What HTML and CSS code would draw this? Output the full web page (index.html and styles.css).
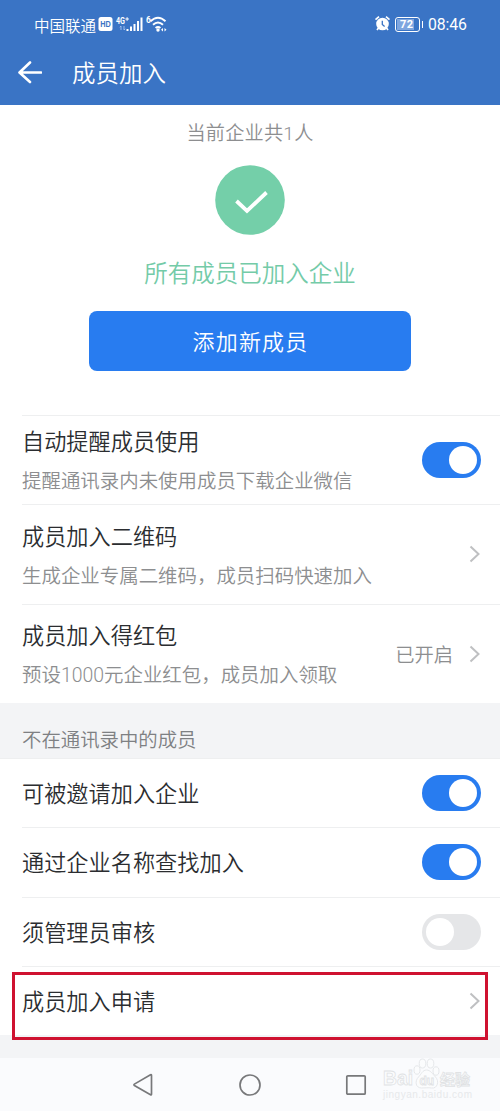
FILE: index.html
```html
<!DOCTYPE html>
<html lang="zh-CN">
<head>
<meta charset="utf-8">
<title>成员加入</title>
<link rel="stylesheet" href="styles.css">
</head>
<body>
<div class="screen">
  <header class="header">
    <div class="status">
      <span class="carrier">中国联通</span>
      <svg class="signals" width="72" height="20" viewBox="0 0 72 20">
        <rect x="1.500" y="3" width="14" height="14" rx="2.500" fill="#fff"/>
        <text class="hd" x="3.200" y="13.200" textLength="10.600" lengthAdjust="spacingAndGlyphs">HD</text>
        <text class="tiny" x="19" y="9.500" textLength="9" lengthAdjust="spacingAndGlyphs">4G</text>
        <path d="M28.300 5h3.600M30.100 3.200v3.600" stroke="#fff" stroke-width="1"/>
        <path d="M24 12v4M22.800 13.200L24 12M27 12v4l1.200-1.200" stroke="#a9c5ef" stroke-width=".9" fill="none"/>
        <path d="M30.500 17v-2M34 17v-4.500M37.500 17v-7M41 17v-10M44.500 17V3.500" stroke="#fff" stroke-width="2"/>
        <text class="tiny" x="49" y="9">6</text>
        <g fill="none" stroke="#fff" stroke-width="1.900"><path d="M53.500 7.200q7.500-7 15 0M56 10.800q5-4.600 10 0M58.600 14q2.400-2.200 4.800 0"/></g>
        <circle cx="61" cy="16" r="1.700" fill="#fff"/>
        <path d="M64 15.800l2-1.800v3.600zM69.500 15.800l-2-1.800v3.600z" fill="#fff"/>
      </svg>
      <span class="grow"></span>
      <svg class="alarm" width="17" height="17" viewBox="0 0 17 17">
        <circle cx="8.500" cy="9" r="6.300" fill="#fff"/>
        <path d="M1.500 4.600L5 1.600M15.500 4.600L12 1.600M4.500 13l-1.500 2M12.500 13l1.500 2" stroke="#fff" stroke-width="1.700"/>
        <path d="M8.300 5.800v3.700l2.300 2" fill="none" stroke="#3a74c5" stroke-width="1.300"/>
      </svg>
      <span class="battery"><span class="charge">72</span></span><i class="cap"></i>
      <span class="time">08:46</span>
    </div>
    <div class="bar">
      <svg width="24" height="24" viewBox="0 0 24 24" fill="none" stroke="#fff" stroke-width="2.600" stroke-linecap="round" stroke-linejoin="round"><path d="M12 2.500L1.500 12.500 12 22M2 12.500h21"/></svg>
      <h1 class="title">成员加入</h1>
    </div>
  </header>

  <section class="summary">
    <p class="count">当前企业共<span class="num">1</span>人</p>
    <svg class="done" width="70" height="70" viewBox="0 0 70 70"><circle cx="35" cy="35" r="34.800" fill="#74cfa9"/><path d="M21.500 36L32 46 51.500 27.500" fill="none" stroke="#fff" stroke-width="3.800"/></svg>
    <p class="joined">所有成员已加入企业</p>
    <button class="add">添加新成员</button>
  </section>

  <section class="list">
    <div class="row remind">
      <div class="words"><h2 class="name">自动提醒成员使用</h2><p class="desc">提醒通讯录内未使用成员下载企业微信</p></div>
      <span class="toggle on"></span>
    </div>
    <div class="row tall">
      <div class="words"><h2 class="name">成员加入二维码</h2><p class="desc">生成企业专属二维码，成员扫码快速加入</p></div>
      <svg class="chevron" width="12" height="18" viewBox="0 0 12 18"><path d="M1.500 1.500L9.500 9 1.500 16.500"/></svg>
    </div>
    <div class="row tall">
      <div class="words"><h2 class="name">成员加入得红包</h2><p class="desc">预设<span class="num">1000</span>元企业红包，成员加入领取</p></div>
      <span class="value">已开启</span>
      <svg class="chevron" width="12" height="18" viewBox="0 0 12 18"><path d="M1.500 1.500L9.500 9 1.500 16.500"/></svg>
    </div>
  </section>

  <h3 class="group">不在通讯录中的成员</h3>

  <section class="list options">
    <div class="row"><h2 class="name">可被邀请加入企业</h2><span class="toggle on"></span></div>
    <div class="row"><h2 class="name">通过企业名称查找加入</h2><span class="toggle on"></span></div>
    <div class="row"><h2 class="name">须管理员审核</h2><span class="toggle"></span></div>
    <div class="row"><h2 class="name">成员加入申请</h2>
      <svg class="chevron" width="12" height="18" viewBox="0 0 12 18"><path d="M1.500 1.500L9.500 9 1.500 16.500"/></svg>
      <span class="highlight"></span>
    </div>
  </section>
  <div class="gap"></div>

  <nav class="nav">
    <svg width="22" height="24" viewBox="0 0 22 24"><path d="M17.500 1.800q1-.5 1 .7v18.500q0 1.200-1 .7L1.400 12.500q-1-.7 0-1.400z"/></svg>
    <svg width="24" height="24" viewBox="0 0 24 24"><circle cx="12" cy="12" r="10"/></svg>
    <svg width="22" height="22" viewBox="0 0 22 22"><rect x="1.800" y="1.800" width="18.400" height="18.400" rx="1"/></svg>
    <div class="watermark">
      <svg width="92" height="46" viewBox="0 0 92 46">
        <g class="mark">
          <text class="brand" x="1" y="28" textLength="30" lengthAdjust="spacingAndGlyphs">Bai</text>
          <ellipse cx="35" cy="13" rx="3" ry="4.200"/><ellipse cx="40.500" cy="6.500" rx="3.300" ry="4.500"/><ellipse cx="48.500" cy="6.500" rx="3.300" ry="4.500"/><ellipse cx="54" cy="14" rx="3" ry="4.200"/>
          <path d="M44.500 13c-4 0-5 4-8 7-4 4-3 11 3 11 3 0 7-.5 10 0 6 1 8-7 4-11-3-3-5-7-9-7z"/>
          <text class="du" x="37.500" y="27.500">du</text>
          <text class="cn" x="58" y="27.500">经验</text>
          <text class="url" x="1" y="41" textLength="89">jingyan.baidu.com</text>
        </g>
      </svg>
    </div>
  </nav>
</div>
</body>
</html>
```
FILE: styles.css
```css
* { box-sizing: border-box; }
body { margin: 0; font-family: "Noto Sans CJK SC", sans-serif; font-weight: 350; background: #fff; }
h1, h2, h3, p { margin: 0; font-weight: 350; }
svg { display: block; flex: none; }
.screen { width: 500px; height: 1111px; display: flex; flex-direction: column; overflow: hidden; }
.screen > * { flex: none; }

.header { height: 105px; background: #3a74c5; color: #fff; }
.status { height: 46px; padding: 4px 33px 0 34px; display: flex; align-items: center; }
.carrier { margin-top: -1px; font-size: 15.5px; line-height: 20px; }
.signals { margin-left: 1px; margin-top: -3px; }
.hd { font: bold 9px "Liberation Sans", sans-serif; fill: #3a74c5; }
.tiny { font: bold 8.5px Roboto, sans-serif; fill: #fff; }
.grow { flex: 1; }
.alarm { margin-top: -3px; }
.battery { width: 25px; height: 15px; margin: -2px 0 0 4px; padding: 1px; border: 1px solid #fff; border-radius: 3px; }
.charge { display: block; width: 17px; height: 11px; padding-left: 3px; background: #7fa6df; font: bold 11px/11px Roboto, sans-serif; letter-spacing: .5px; }
.cap { width: 1px; height: 7px; margin: -2px 5px 0 2px; background: #fff; }
.time { font: 400 15.8px/20px Roboto, sans-serif; letter-spacing: -.1px; width: 39px; white-space: nowrap; }
.bar { height: 52px; padding-left: 18px; display: flex; align-items: center; }
.title { margin-left: 30px; font-size: 23.5px; line-height: 34px; }
.num { font-family: Roboto, sans-serif; font-weight: 300; line-height: 1; }

.summary { height: 310px; padding-top: 13px; display: flex; flex-direction: column; align-items: center; }
.count { color: #8d8e90; font-size: 19.2px; line-height: 28px; letter-spacing: .2px; }
.done { margin-top: 19px; }
.joined { margin-top: 19px; color: #74cba8; font-size: 23.5px; line-height: 36px; }
.add { width: 322px; height: 60px; margin-top: 21px; padding: 0 0 2px 1px; border: 0; border-radius: 8px; background: #287cf0; color: #fff; font: 350 22px/58px "Noto Sans CJK SC", sans-serif; letter-spacing: 1.2px; }

.row { position: relative; height: 69.3px; margin-left: 22px; padding-right: 19px; display: flex; align-items: center; border-top: 1px solid #eeeff0; }
.row.remind { height: 89px; }
.row.tall { height: 99.5px; }
.words { flex: 1; }
.name { flex: 1; padding-bottom: 2px; color: #2b2d30; font-size: 22.2px; line-height: 34px; }
.words .name { padding: 0; white-space: nowrap; }
.desc { margin-top: 6px; color: #8d8e90; font-size: 19.45px; line-height: 34px; white-space: nowrap; }
.tall .words { padding-top: 1px; }
.value { margin-right: 16px; color: #8d8e90; font-size: 19.3px; line-height: 28px; }
.chevron { fill: none; stroke: #bfc0c2; stroke-width: 2; }
.toggle { width: 59px; height: 36px; padding: 4px; border-radius: 18px; background: #e5e6e8; display: flex; }
.toggle::before { content: ""; width: 28px; height: 28px; border-radius: 50%; background: #fff; }
.toggle.on { background: #287cf0; justify-content: flex-end; }
.group { height: 55px; padding: 9px 22px 0; background: #f3f4f6; color: #7e8083; font-size: 19.4px; line-height: 54px; }
.options .row:first-child { margin-left: 0; padding-left: 22px; }
.highlight { position: absolute; left: -10px; top: 5px; width: 476px; height: 68px; border: 3px solid #cf1230; z-index: 1; }
.gap { flex: 1 !important; background: #f3f4f6; }

.nav { position: relative; height: 53px; padding: 0 0 0 133px; display: flex; align-items: center; gap: 83px; background: #fafbfd; }
.nav > svg { fill: none; stroke: #77787a; stroke-width: 1.7; }
.watermark { position: absolute; left: 382px; top: -1px; }
.mark { fill: #fbfcfd; stroke: #e0e2e4; stroke-width: .8; }
.brand { font: bold 21px/1 "Liberation Sans", sans-serif; }
.du { font: bold 12px "Liberation Sans", sans-serif; }
.cn { font: bold 15px "Noto Sans CJK SC", sans-serif; }
.url { font: 10px/1 "Liberation Sans", sans-serif; fill: #e7e9eb; stroke: none; }
```
